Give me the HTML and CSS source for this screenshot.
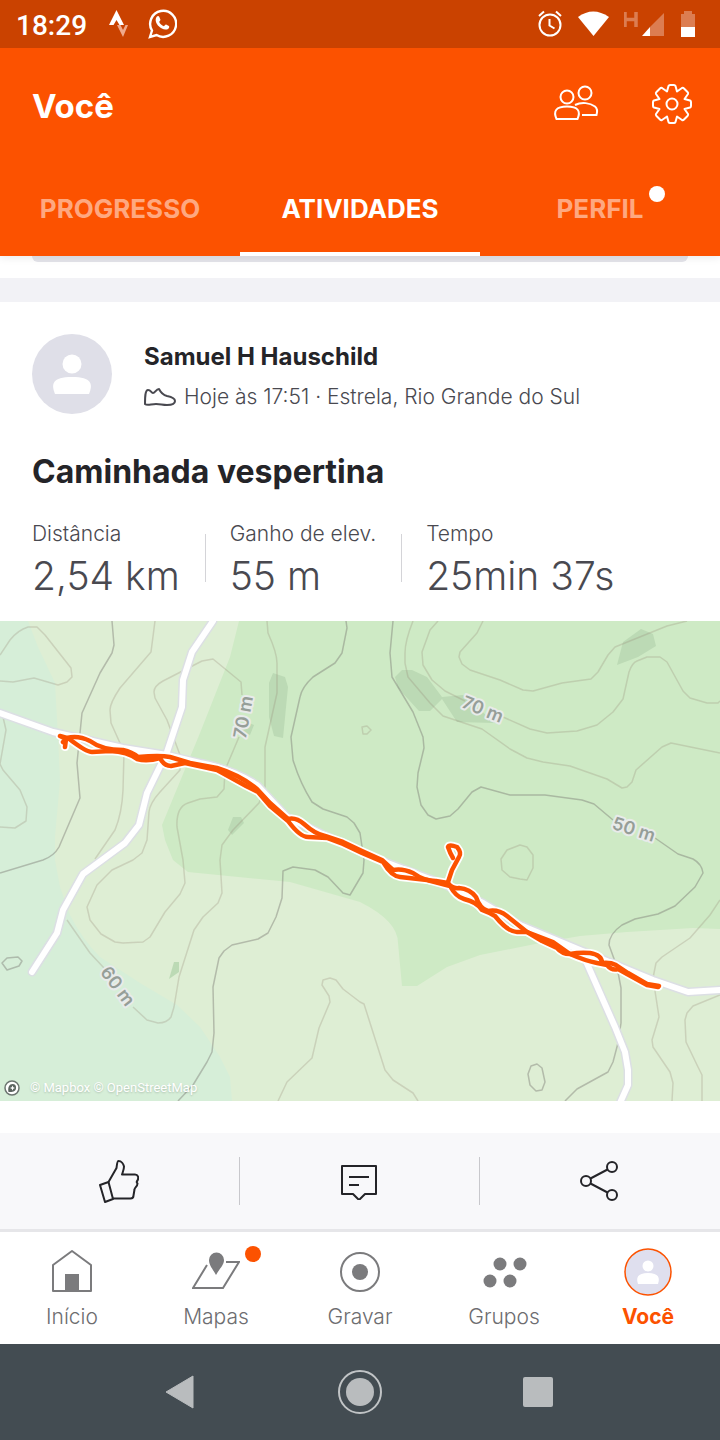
FILE: index.html
```html
<!DOCTYPE html>
<html lang="pt-BR">
<head>
  <meta charset="UTF-8">
  <meta name="viewport" content="width=device-width, initial-scale=1">
  <title>Você</title>
  <link rel="stylesheet" href="styles.css">
</head>
<body>
  <div class="status-bar">
    <span class="clock">18:29</span>
    <svg class="status-strava" width="22" height="30" viewBox="0 0 22 30">
      <path d="M8.500 1 16 16h-4.500l-3-5-3 5H1z" fill="#fff"/>
      <path d="M9 16h3.500l2.500 5 2.500-5H20L15 28z" fill="#f0a98a"/>
    </svg>
    <svg class="status-whats" width="30" height="32" viewBox="0 0 30 32">
      <path d="M3 29 5 22.500A13 13 0 1 1 9.500 27z" fill="none" stroke="#fff" stroke-width="2.400"/>
      <path d="M9.500 9c1-1.300 2.200-1.200 2.700-.2l1.200 2.800c.2.900-.9 1.700-1.200 2.400 1 2 2.500 3.400 4.700 4.300.8-.6 1.300-2 2.200-1.800l2.800 1.400c.8.700.2 2.300-.8 3-3 1.900-7-.3-9.300-2.600S7.500 12.500 9.500 9z" fill="#fff"/>
    </svg>
    <div class="status-right">
      <svg width="26" height="28" viewBox="0 0 26 28" fill="none" stroke="#fff" stroke-width="2">
        <circle cx="14" cy="15" r="10.500"/>
        <path d="M13.500 9v6.500l5 3M3 6l5-4.500M25 6l-5-4.500"/>
      </svg>
      <svg width="32" height="26" viewBox="0 0 32 26">
        <path d="M1 6q15-11 31 0L16.500 25z" fill="#fff"/>
      </svg>
      <svg width="42" height="28" viewBox="0 0 42 28">
        <path d="M1 2v15M12 2v15M1 9.500h11" fill="none" stroke="#dc7d51" stroke-width="3.500"/>
        <path d="M40 3v23H26V17z" fill="#dc7d51"/>
        <path d="M26 17v9h-8z" fill="#fff"/>
      </svg>
      <svg width="14" height="28" viewBox="0 0 14 28">
        <path d="M0 4h3V1h8v3h3v13H0z" fill="#dc7d51"/>
        <path d="M0 17h14v10H0z" fill="#fff"/>
      </svg>
    </div>
  </div>

  <header class="app-header">
    <div class="title-row">
      <h1>Você</h1>
      <button class="icon-button" aria-label="Amigos">
        <svg width="48" height="40" viewBox="0 0 48 40" fill="none" stroke="#fff" stroke-width="2">
          <circle cx="15" cy="13" r="6.500"/>
          <circle cx="33" cy="9" r="6.500"/>
          <path d="M4.500 35C1 27 4 22.500 15 22.500s14 4.500 10.500 12.500z" stroke-linejoin="round"/>
          <path d="M23 21c7-3.500 15-2 20 1.500 2.500 2 2.500 5 1.500 8.500H30"/>
        </svg>
      </button>
      <button class="icon-button" aria-label="Configurações">
        <svg width="40" height="40" viewBox="-20 -20 40 40" fill="none" stroke="#fff" stroke-width="2" stroke-linejoin="round">
          <path d="M-3.500-18Q-3-19-2-19H2Q3-19 3.500-18L5-12.500 10-16Q11-16.500 12-15.500L15.500-12Q16.500-11 16-10L12.500-5 18-3.500Q19-3 19-2V2Q19 3 18 3.500L12.500 5 16 10Q16.500 11 15.500 12L12 15.500Q11 16.500 10 16L5 12.500 3.500 18Q3 19 2 19H-2Q-3 19-3.500 18L-5 12.500-10 16Q-11 16.500-12 15.500L-15.500 12Q-16.500 11-16 10L-12.500 5-18 3.500Q-19 3-19 2V-2Q-19-3-18-3.500L-12.500-5-16-10Q-16.500-11-15.500-12L-12-15.500Q-11-16.500-10-16L-5-12.500z"/>
          <circle r="5.500"/>
        </svg>
      </button>
    </div>
    <nav class="tabs">
      <a href="#progresso">PROGRESSO</a>
      <a href="#atividades" class="active">ATIVIDADES</a>
      <a href="#perfil"><span class="tab-label">PERFIL<span class="tab-dot"></span></span></a>
    </nav>
  </header>

  <main class="feed">
    <div class="previous-card"><div class="previous-box"></div></div>

    <article class="activity">
      <div class="athlete">
        <svg class="avatar" viewBox="0 0 80 80">
          <circle cx="40" cy="40" r="40" fill="#dfdfe8"/>
          <circle cx="40" cy="30" r="9.500" fill="#fff"/>
          <path d="M23 60c-4-10-3-17 17-17s21 7 17 17z" fill="#fff"/>
        </svg>
        <div class="athlete-text">
          <h2>Samuel H Hauschild</h2>
          <p class="meta">
            <svg width="32" height="20" viewBox="0 0 32 20" fill="none" stroke="#494950" stroke-width="2" stroke-linejoin="round">
              <path d="M1 17C1 11 1 3 4 3s3 3 5 3 3-4 6-4c2 4 4 6 8 7 5 1 8 2 8 5s-3 4-8 4-6-1-11-1-9 2-11 0z"/>
            </svg>
            <span>Hoje às 17:51 · Estrela, Rio Grande do Sul</span>
          </p>
        </div>
      </div>
      <h3>Caminhada vespertina</h3>
      <dl class="stats">
        <div class="stat"><dt>Distância</dt><dd>2,54 km</dd></div>
        <div class="stat"><dt>Ganho de elev.</dt><dd>55 m</dd></div>
        <div class="stat"><dt>Tempo</dt><dd>25min 37s</dd></div>
      </dl>

      <div class="map">
        <svg class="map-drawing" viewBox="0 0 720 480">
          <rect width="720" height="480" fill="#deeed4"/>
          <path fill="#d6eed8" d="M0 0H28L38 26 55 62 58 116 60 159 55 216V239L60 266 70 294Q82 318 100 336L140 362 177 384 200 406 220 436 230 456 232 480H0z"/>
          <path fill="#ceeac5" d="M239 0 230 36 200 112 162 204 165 219 173 239 188 251 290 261 360 281Q398 300 398 322L402 365H417L447 346 480 334 540 322 580 315 627 311 693 307 720 308V0z"/>

          <g fill="#bcdab5">
            <path d="M273 52 285 56 288 66 283 117 274 115 269 96V62z"/>
            <path d="M233 196H241L244 202 232 214 228 209z"/>
            <path d="M247 101 254 104 250 114 240 110z"/>
            <path d="M402 49H412L427 56 442 76 463 74 495 102 457 101 442 78 430 90H419L398 67 395 56z"/>
            <path d="M623 21 641 8 653 13 656 25 638 36 617 44z"/>
            <path d="M174 341H179V351L169 358z"/>
          </g>

          <!-- contour lines -->
          <g class="contour">
            <path d="M0 34 10 19Q18 9 28 6H37L45 14 71 47 72 56 67 61 58 64 34 57 13 61 0 60"/>
            <path d="M155 0 151 31 120 67Q110 82 110 89L111 102 124 131 123 169Q122 192 115 209L95 238"/>
            <path d="M242 74 241 61 213 38 202 40 163 60Q154 65 154 71L155 77 167 99 180 134V149L160 171Q150 182 149 191L147 219 142 232 133 239 112 249 97 264 87 286 90 299 101 313 115 321 123 322 143 321 150 316 165 291 180 273 185 262 183 239 177 206Q176 186 188 182L200 178 217 176 224 168 225 149 239 116"/>
            <path d="M267 0 268 12Q277 32 277 42V72L265 126V166L259 182 233 209 222 224 220 239 222 272 218 282 203 296 194 309 179 356 174 386 171 396Q167 402 158 402L147 399 133 386M104 347 90 332 67 299"/>
            <path d="M3 96 6 109 0 143 3 149 20 169 27 186 26 200 15 207 0 206"/>
            <path d="M413 0Q405 20 405 32V42L408 56 430 82 443 95 482 108 510 128 527 137 543 141 570 145 607 158 622 167 627 166 632 161 636 149 662 126 671 122 720 132"/>
            <path d="M438 0 430 9 422 31 423 44 432 59 445 70 465 80M503 96 530 108 547 112 577 110 597 104 613 91 623 78 629 51Q632 42 637 40L647 36H660L667 41 683 70 690 77 707 82 718 82 720 80"/>
            <path d="M483 0 477 12 460 31 459 36 462 43 470 49 500 59 523 69 533 70 562 62 591 58 598 51 608 34 615 26 667 5 687 0"/>
            <path d="M362 106 367 105 371 109 367 113H363z"/>
            <path d="M501 238 507 229 520 224 527 226 533 234V247L527 259 520 258 510 256 502 249z"/>
            <path d="M278 480 287 461 312 437 319 407 330 381 329 375 322 364 323 359 330 357 336 359 343 368 360 381 364 383 385 449 393 459 413 472 418 480"/>
            <path d="M720 279 710 294 690 317 662 336 656 342 653 357 659 396 652 419 653 426 670 451 673 462 672 480"/>
            <path d="M720 374 693 385 687 392 685 399 686 421 698 446 702 454V480"/>
          </g>
          <g class="contour major">
            <path d="M112 0 114 24 112 32 100 52 82 92 77 142 80 177 59 226Q54 235 43 239L0 252"/>
            <path d="M346 0 347 7 342 32 335 42 313 56Q302 66 300 76L291 116 293 139Q300 162 312 181L323 188 347 196 354 202 360 212 364 239 363 252 350 274 343 272 328 256 315 249 293 246 283 250 282 277 276 296 268 312 258 318 232 324 224 330 219 337 213 366 214 412 212 431 207 441 193 464 178 480"/>
            <path d="M393 0 390 32 392 56 413 91 423 116 424 127 418 152 417 166 421 184 428 194 436 198 450 195 458 188 472 171 481 166 510 174H545L582 179 594 183 613 199M655 217 678 233 693 238Q702 243 703 252L695 266 675 285 658 293 635 298 622 304Q609 313 609 324L617 346 621 367V402L618 422 613 441 608 451 577 468 565 480"/>
            <path d="M537 443 542 447 545 461 542 469 536 470 530 464 528 453 531 445z"/>
            <path d="M2 342 7 337 18 336 22 340 19 345 7 349z"/>
          </g>

          <!-- roads, casing first -->
          <g class="road casing">
            <path d="M0 92 53 111 123 127 167 134 200 142Q232 148 257 164L287 196 320 212 377 238 443 263 483 282 520 304 580 329 653 359 688 371 720 369"/>
            <path d="M213 0 192 31 183 59 182 86 167 131 147 172 139 204 125 222 102 239 83 253 63 289 57 312 32 351"/>
            <path d="M585 338 615 406 625 431 628 449V464L620 482"/>
          </g>
          <g class="road">
            <path d="M0 92 53 111 123 127 167 134 200 142Q232 148 257 164L287 196 320 212 377 238 443 263 483 282 520 304 580 329 653 359 688 371 720 369"/>
            <path d="M213 0 192 31 183 59 182 86 167 131 147 172 139 204 125 222 102 239 83 253 63 289 57 312 32 351"/>
            <path d="M585 338 615 406 625 431 628 449V464L620 482"/>
          </g>

          <g class="map-labels">
            <text transform="translate(243 96) rotate(-80)">70 m</text>
            <text transform="translate(483 88) rotate(22)">70 m</text>
            <text transform="translate(634 208) rotate(18)">50 m</text>
            <text transform="translate(118 365) rotate(53)">60 m</text>
          </g>

          <defs>
            <g id="route">
              <path d="M65 126 66 118 60 115 67 117Q78 114 90 120 102 129 123 129 132 131 138 136 160 134 170 136L190 142 217 147Q240 154 257 168L270 182 288 198Q296 196 304 203 315 213 325 215L343 221 362 230 382 239 393 249Q402 247 413 252 424 260 436 260L448 262Q452 268 459 267 470 268 476 276 480 288 488 290 498 288 507 295L527 311 553 321 570 333Q580 331 590 332 602 334 602 342 610 341 616 344L628 352 647 363 659 365"/>
              <path d="M63 121 68 117Q86 131 92 131L110 130Q128 131 137 138 147 141 160 137 164 145 171 145L185 142 217 149 246 165 258 171 270 185 288 200Q300 216 308 216L327 217 343 223 362 232 383 241Q391 255 400 256L427 259 450 265Q456 276 464 278 477 281 482 289 490 292 495 295 508 311 517 311L527 311 542 320 557 327Q562 333 570 333 586 340 597 342L607 344Q612 350 618 348L627 353 647 364 658 366"/>
              <path d="M448 261 452 249 459 236Q462 232 457 226 449 223 448 226 450 232 453 237 458 238"/>
            </g>
          </defs>
          <use href="#route" class="route route-casing"/>
          <use href="#route" class="route"/>
        </svg>
        <div class="attribution">
          <svg width="16" height="16" viewBox="0 0 16 16">
            <circle cx="8" cy="8" r="7" fill="#fff" stroke="#6c7570" stroke-width="1.500"/>
            <path d="M4.500 12c-1-5 1-8 4-8a3.700 3.700 0 0 1 3.500 4c0 3-3 4.500-7.500 4z" fill="#5c6560"/>
            <path d="M8.500 5.500 9.300 7.200 11 8 9.300 8.800 8.500 10.500 7.700 8.800 6 8 7.700 7.200z" fill="#fff"/>
          </svg>
          <span>© Mapbox © OpenStreetMap</span>
        </div>
      </div>

      <div class="actions">
        <button aria-label="Curtir">
          <svg width="40" height="44" viewBox="0 0 40 44" fill="none" stroke="#242428" stroke-width="2" stroke-linejoin="round">
            <path d="M1 26 9.500 23 14 40 6 43z"/>
            <path d="M9.500 23 17.500 9C18 6 18 2 19.500 2c3 0 5 3 5.500 5.500 0 3-1 5-2 8h13c3 0 4 3 2.500 6-1 1-1 2 0 3 0 3-3 4-3 6l-1 6c0 2-1 3-3 3H14"/>
          </svg>
        </button>
        <button aria-label="Comentar">
          <svg width="38" height="38" viewBox="0 0 38 38" fill="none" stroke="#242428" stroke-width="2" stroke-linejoin="round">
            <path d="M2 4H36V32H25L19 38 13 32H2z"/>
            <path d="M9 15H29M9 23H19"/>
          </svg>
        </button>
        <button aria-label="Compartilhar">
          <svg width="40" height="40" viewBox="0 0 40 40" fill="none" stroke="#242428" stroke-width="2">
            <circle cx="7" cy="20" r="5"/>
            <circle cx="33" cy="6" r="5"/>
            <circle cx="33" cy="34" r="5"/>
            <path d="M11.500 17.500 28.500 8.500M11.500 22.500 28.500 31.500"/>
          </svg>
        </button>
      </div>
    </article>
  </main>

  <nav class="bottom-nav">
    <a href="#inicio">
      <svg width="48" height="48" viewBox="0 0 48 48">
        <path d="M5 17 24 3 43 17V43H5z" fill="none" stroke="#7b7b7d" stroke-width="2" stroke-linejoin="round"/>
        <path d="M17 26h14v16H17z" fill="#7b7b7d"/>
      </svg>
      <span>Início</span>
    </a>
    <a href="#mapas">
      <svg width="48" height="48" viewBox="0 0 48 48">
        <path d="M15 17 1 40H31L47 14H34" fill="none" stroke="#7b7b7d" stroke-width="2"/>
        <path d="M24 27C20 20 17 17 17 12a7.500 7.500 0 0 1 15 0c0 5-4 8-8 15z" fill="#7b7b7d"/>
      </svg>
      <span>Mapas</span>
      <span class="nav-dot"></span>
    </a>
    <a href="#gravar">
      <svg width="48" height="48" viewBox="0 0 48 48">
        <circle cx="24" cy="24" r="19" fill="none" stroke="#7b7b7d" stroke-width="2"/>
        <circle cx="24" cy="24" r="8" fill="#7b7b7d"/>
      </svg>
      <span>Gravar</span>
    </a>
    <a href="#grupos">
      <svg width="48" height="48" viewBox="0 0 48 48" fill="#7b7b7d">
        <circle cx="20" cy="16" r="6.500"/>
        <circle cx="40" cy="16" r="6.500"/>
        <circle cx="10" cy="33" r="6.500"/>
        <circle cx="30" cy="33" r="6.500"/>
      </svg>
      <span>Grupos</span>
    </a>
    <a href="#voce" class="active">
      <svg width="48" height="48" viewBox="0 0 48 48">
        <circle cx="24" cy="24" r="23" fill="#dfdfee" stroke="#fc5200" stroke-width="1.500"/>
        <circle cx="24" cy="18" r="5.500" fill="#fff"/>
        <path d="M14 36c-2-6-1-11 10-11s12 5 10 11z" fill="#fff"/>
      </svg>
      <span>Você</span>
    </a>
  </nav>

  <div class="system-bar">
    <button aria-label="Voltar">
      <svg width="44" height="44" viewBox="0 0 44 44"><path d="M6 22 33 6V38z" fill="#b9bcbe" stroke="#b9bcbe" stroke-linejoin="round"/></svg>
    </button>
    <button aria-label="Tela inicial">
      <svg width="44" height="44" viewBox="0 0 44 44">
        <circle cx="22" cy="22" r="21" fill="none" stroke="#c1c4c6" stroke-width="2"/>
        <circle cx="22" cy="22" r="14" fill="#b9bcbe"/>
      </svg>
    </button>
    <button aria-label="Recentes">
      <svg width="44" height="44" viewBox="0 0 44 44"><rect x="7" y="7" width="30" height="30" rx="2" fill="#b9bcbe"/></svg>
    </button>
  </div>
</body>
</html>
```

FILE: styles.css
```css
* {
  box-sizing: border-box;
}

body {
  margin: 0;
  min-height: 100vh;
  display: flex;
  flex-direction: column;
  background: white;
  color: #242428;
  font-family: Inter, "Liberation Sans", sans-serif;
}

h1, h2, h3, p, dl, dd {
  margin: 0;
}

svg {
  display: block;
  flex: none;
}

button {
  border: none;
  padding: 0;
  background: none;
  cursor: pointer;
}

a {
  color: inherit;
  text-decoration: none;
}

/* status bar */
.status-bar {
  position: relative;
  z-index: 2;
  height: 48px;
  padding: 0 25px 0 16px;
  display: flex;
  align-items: center;
  background: #ca4200;
  color: white;
}

.clock {
  padding-top: 3px;
  font: 500 28px/48px Roboto, sans-serif;
}

.status-strava {
  margin-left: 21px;
}

.status-whats {
  margin-left: 17px;
}

.status-right {
  display: flex;
  align-items: center;
  gap: 15px;
  margin-left: auto;
}

/* header */
.app-header {
  position: relative;
  background: #fc5200;
  color: white;
  box-shadow: 0 2px 8px rgba(0, 0, 0, 0.08);
}

.title-row {
  height: 112px;
  padding: 0 24px 0 32px;
  display: flex;
  align-items: center;
  gap: 48px;
}

h1 {
  flex: 1;
  padding-top: 3px;
  font-size: 33px;
  font-weight: 700;
}

.icon-button {
  width: 48px;
  height: 48px;
  display: grid;
  place-items: center;
}

.tabs {
  display: grid;
  grid-template-columns: repeat(3, 1fr);
  height: 96px;
}

.tabs a {
  display: flex;
  align-items: center;
  justify-content: center;
  border-top: 4px solid transparent;
  border-bottom: 4px solid transparent;
  font-size: 26px;
  font-weight: 700;
  color: #fea880;
}

.tabs .active {
  color: white;
  border-bottom-color: white;
}

.tab-label {
  position: relative;
}

.tab-dot {
  position: absolute;
  top: -7px;
  right: -22px;
  width: 16px;
  height: 16px;
  border-radius: 50%;
  background: white;
}

/* feed */
.feed {
  flex: 1;
}

.previous-card {
  height: 46px;
  padding: 0 32px;
  border-bottom: 24px solid #f2f2f6;
}

.previous-box {
  height: 6px;
  border-radius: 0 0 8px 8px;
  background: #e4e4ea;
}

.athlete {
  display: flex;
  gap: 32px;
  padding: 32px 32px 0;
}

.avatar {
  width: 80px;
  height: 80px;
}

.athlete-text {
  padding-top: 5px;
}

h2 {
  font-size: 24px;
  line-height: 36px;
  font-weight: 700;
}

.meta {
  display: flex;
  align-items: center;
  gap: 8px;
  font-size: 21px;
  line-height: 44px;
  font-weight: 300;
  color: #494950;
}

h3 {
  padding: 31px 32px 0;
  font-size: 32px;
  line-height: 44px;
  font-weight: 700;
}

.stats {
  display: flex;
  padding: 24px 32px 21px;
  color: #494950;
  font-weight: 300;
}

.stat + .stat {
  position: relative;
  margin-left: 25px;
  padding-left: 25px;
}

.stat + .stat::before {
  content: "";
  position: absolute;
  left: 0;
  top: 16px;
  width: 1px;
  height: 48px;
  background: #d4d4d8;
}

dt {
  font-size: 21px;
  line-height: 32px;
}

dd {
  padding-top: 2px;
  font-size: 39px;
  line-height: 48px;
}

/* map */
.map {
  position: relative;
}

.map-drawing {
  width: 100%;
  height: auto;
}

.contour {
  fill: none;
  stroke: #988a78;
  stroke-opacity: 0.28;
  stroke-width: 1.5;
  stroke-linejoin: round;
}

.contour.major {
  stroke: #78746f;
  stroke-opacity: 0.42;
}

.road {
  fill: none;
  stroke: white;
  stroke-width: 6;
  stroke-linecap: round;
  stroke-linejoin: round;
}

.road.casing {
  stroke: #dcdfe4;
  stroke-width: 9;
}

.map-labels {
  font-size: 18px;
  font-weight: 600;
  fill: #969e98;
  stroke: #e8ebea;
  stroke-width: 4px;
  stroke-linejoin: round;
  paint-order: stroke;
  text-anchor: middle;
  dominant-baseline: central;
}

.route {
  fill: none;
  stroke: #fc5200;
  stroke-width: 4.5;
  stroke-linecap: round;
  stroke-linejoin: round;
}

.route-casing {
  stroke: white;
  stroke-width: 8;
}

.attribution {
  position: absolute;
  left: 4px;
  bottom: 4px;
  display: flex;
  align-items: center;
  gap: 10px;
  color: white;
  font: 13px/18px Roboto, sans-serif;
  text-shadow: 0 1px 2px rgba(0, 0, 0, 0.2);
}

/* like, comment, share */
.actions {
  display: grid;
  grid-template-columns: repeat(3, 1fr);
  margin-top: 32px;
  height: 96px;
  background: #f8f8fa;
}

.actions button {
  display: grid;
  place-items: center;
  margin: 24px 0;
  padding-right: 1px;
  border-right: 1px solid #c8c8cc;
}

.actions button:last-child {
  border-right-color: transparent;
}

/* bottom navigation */
.bottom-nav {
  display: grid;
  grid-template-columns: repeat(5, 1fr);
  border-top: 3px solid #e6e6e9;
  height: 115px;
}

.bottom-nav a {
  position: relative;
  display: flex;
  flex-direction: column;
  align-items: center;
  gap: 5px;
  padding-top: 16px;
  font-size: 21px;
  line-height: 32px;
  font-weight: 300;
  color: #6d6d70;
}

.bottom-nav .active {
  color: #fc5200;
  font-weight: 700;
}

.nav-dot {
  position: absolute;
  top: 14px;
  left: calc(50% + 29px);
  width: 16px;
  height: 16px;
  border-radius: 50%;
  background: #fc5200;
}

.system-bar {
  display: flex;
  justify-content: center;
  align-items: center;
  gap: 134px;
  height: 96px;
  background: #434c52;
}
```
